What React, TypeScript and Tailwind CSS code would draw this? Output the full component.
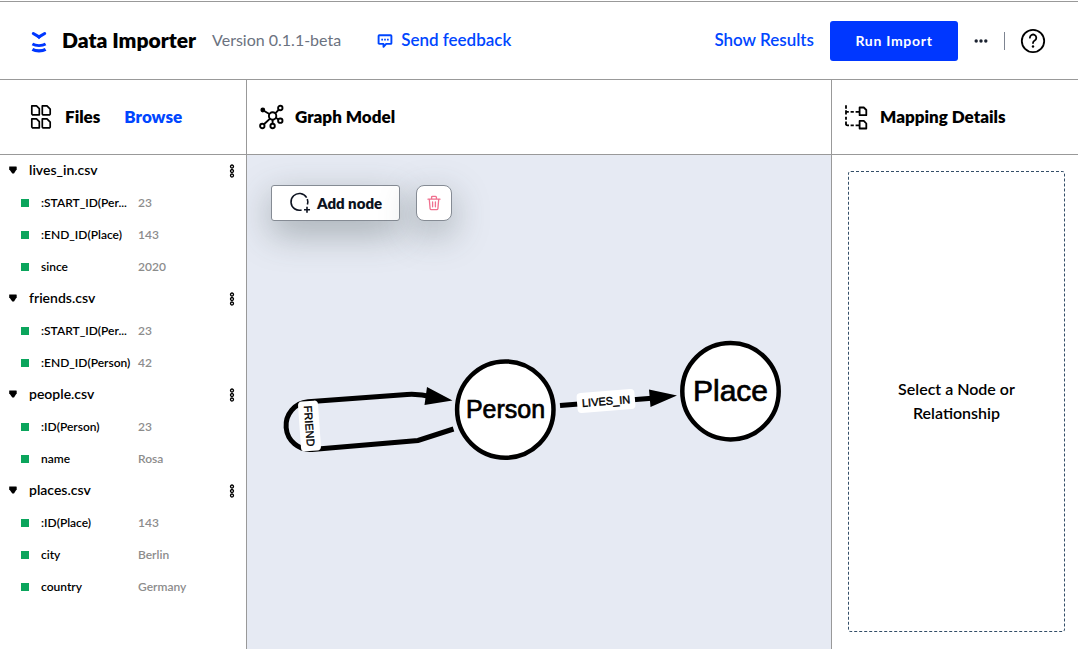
import React from "react";

type Field = { name: string; sample: string };
type SourceFile = { name: string; fields: Field[] };

const files: SourceFile[] = [
  {
    name: "lives_in.csv",
    fields: [
      { name: ":START_ID(Person)", sample: "23" },
      { name: ":END_ID(Place)", sample: "143" },
      { name: "since", sample: "2020" },
    ],
  },
  {
    name: "friends.csv",
    fields: [
      { name: ":START_ID(Person)", sample: "23" },
      { name: ":END_ID(Person)", sample: "42" },
    ],
  },
  {
    name: "people.csv",
    fields: [
      { name: ":ID(Person)", sample: "23" },
      { name: "name", sample: "Rosa" },
    ],
  },
  {
    name: "places.csv",
    fields: [
      { name: ":ID(Place)", sample: "143" },
      { name: "city", sample: "Berlin" },
      { name: "country", sample: "Germany" },
    ],
  },
];

const MAX_NAME = 16;

function shorten(name: string) {
  return name.length > MAX_NAME ? `${name.slice(0, MAX_NAME - 3)}...` : name;
}

function Logo() {
  return (
    <svg viewBox="0 0 16 22" className="mt-1 h-[22px] w-4 shrink-0 text-[#0037ff]" fill="none" stroke="currentColor" aria-hidden="true">
      <path d="M2.300 2.500L8 5.900 13.700 2.500" strokeWidth="3" strokeLinecap="round" strokeLinejoin="round" />
      <path d="M6 6h4L8 8.200z" fill="currentColor" stroke="none" />
      <path d="M1.400 13c3.500 2.100 9.700 2.100 13.200 0" strokeWidth="2.800" />
      <path d="M1.400 18.300c3.500 2 9.700 2 13.200 0" strokeWidth="3.200" />
    </svg>
  );
}

function FeedbackIcon() {
  return (
    <svg viewBox="0 0 16 16" className="size-4 shrink-0" fill="none" stroke="currentColor" strokeWidth="1.900" aria-hidden="true">
      <path d="M2.300 3.300h11.400a.7.7 0 0 1 .7.7v7.200a.7.7 0 0 1-.7.7H9.200L6.500 14.800v-2.900H2.300a.7.7 0 0 1-.7-.7V4a.7.7 0 0 1 .7-.7z" strokeLinejoin="round" />
      <path d="M4.300 7.600h1.700M7.150 7.600h1.700M10 7.600h1.700" strokeWidth="1.600" />
    </svg>
  );
}

function FilesIcon() {
  return (
    <svg viewBox="0 0 22 26" className="h-[26px] w-[22px] shrink-0" fill="none" stroke="currentColor" strokeWidth="1.700" strokeLinejoin="round" aria-hidden="true">
      <path d="M1.800 1.900h4.700l2.800 2.800v6.100H2.600l-.8-.8z" />
      <path d="M12.300 1.900h4.700l3.200 3.200v5l-.7.7h-6.500l-.7-.7z" />
      <path d="M1.800 14.900h4.700l2.800 2.800v6.100H2.600l-.8-.8z" />
      <path d="M12.300 14.900h4.700l3.200 3.200v5l-.7.7h-6.500l-.7-.7z" />
    </svg>
  );
}

function GraphIcon() {
  return (
    <svg viewBox="0 0 26 26" className="size-[26px] shrink-0" fill="none" stroke="currentColor" strokeWidth="1.900" aria-hidden="true">
      <circle cx="3.800" cy="6" r="2.400" fill="currentColor" stroke="none" />
      <circle cx="13.600" cy="12" r="3.700" />
      <circle cx="21.300" cy="4" r="2.200" />
      <circle cx="21.300" cy="16.700" r="2.200" />
      <circle cx="13.600" cy="22" r="2.200" />
      <circle cx="3.300" cy="22" r="2.200" />
      <path d="M4.800 6.700l6 3.600M16.300 9.300l3.500-3.700M16.900 13.800l2.500 1.700M13.600 15.700v4M5 20.300l6-5.700" />
    </svg>
  );
}

function MappingIcon() {
  return (
    <svg viewBox="0 0 24 26" className="h-[26px] w-6 shrink-0" fill="none" stroke="currentColor" strokeWidth="1.800" aria-hidden="true">
      <path d="M2 1.200v3.600M2 6.300v4.300M2 12.800v3M2 17.600v3.200" />
      <path d="M2 7.900h2.800M6.600 7.900h3.200M11.600 7.900H15M2 19.800c0 1.200.4 1.600 1.500 1.600h1.500M6.600 21.400h3.200M11.600 21.400H15" />
      <path d="M15.600 3.500h4.200l2.500 2.500v5.200h-6.700zM15.600 16.900h4.200l2.500 2.600v5h-6.700z" strokeLinejoin="round" />
    </svg>
  );
}

function HelpIcon() {
  return (
    <svg viewBox="0 0 26 26" className="size-[26px]" fill="none" stroke="currentColor" strokeWidth="1.800" strokeLinecap="round" aria-hidden="true">
      <circle cx="13" cy="13" r="11.200" />
      <path d="M9.900 9.700a3.200 3.200 0 1 1 4.800 2.800c-1.200.7-1.700 1.200-1.700 2.500" />
      <circle cx="13" cy="18.500" r="1.200" fill="currentColor" stroke="none" />
    </svg>
  );
}

function AddNodeIcon() {
  return (
    <svg viewBox="0 0 22 22" className="size-[22px] shrink-0" fill="none" stroke="currentColor" strokeWidth="1.600" aria-hidden="true">
      <path d="M12.600 18A8.400 8.400 0 1 1 18.400 12.500" strokeDasharray="37 1.500" />
      <path d="M18 14.700v6M15 17.700h6" />
    </svg>
  );
}

function TrashIcon() {
  return (
    <svg viewBox="0 0 16 16" className="size-4" fill="none" stroke="currentColor" strokeWidth="1.300" strokeLinecap="round" strokeLinejoin="round" aria-hidden="true">
      <path d="M2 4.200h12M5.600 4V2.200c0-.6.300-.9.900-.9h3c.6 0 .9.300.9.900V4M3.300 4.400l.8 9.200c.1.700.5 1.100 1.200 1.100h5.400c.7 0 1.100-.4 1.200-1.100l.8-9.200M6.600 7v4.800M9.400 7v4.800" />
    </svg>
  );
}

function KebabIcon() {
  return (
    <svg viewBox="0 0 6 14" className="h-3.5 w-1.5" fill="none" stroke="currentColor" strokeWidth="1.300" aria-hidden="true">
      <circle cx="3" cy="2.500" r="1.500" />
      <circle cx="3" cy="7" r="1.500" />
      <circle cx="3" cy="11.500" r="1.500" />
    </svg>
  );
}

function FileGroup({ file }: { file: SourceFile }) {
  return (
    <section>
      <div className="flex h-8 items-center justify-between pl-2 pr-[11px]">
        <button type="button" className="flex items-center gap-3 pb-0.5 text-sm font-semibold">
          <svg viewBox="0 0 9 8" className="h-2 w-[9px]" fill="currentColor" aria-hidden="true">
            <path d="M1.300.5h7l.4.600v2.200L6 7.500H4.300L1.200 3.300V1z" />
          </svg>
          {file.name}
        </button>
        <button type="button" aria-label={`${file.name} options`}>
          <KebabIcon />
        </button>
      </div>
      <table className="w-full table-fixed text-left text-xs">
        <colgroup>
          <col className="w-[41px]" />
          <col className="w-[97px]" />
          <col />
        </colgroup>
        <tbody>
          {file.fields.map((field) => (
            <tr key={field.name} className="h-8">
              <td className="p-0 pl-[21px]">
                <span className="block size-2 bg-[#0ba55c]" />
              </td>
              <th scope="row" title={field.name} className="whitespace-nowrap p-0 font-semibold">
                {shorten(field.name)}
              </th>
              <td className="p-0 font-semibold text-[#8c8c8c]">{field.sample}</td>
            </tr>
          ))}
        </tbody>
      </table>
    </section>
  );
}

function GraphDrawing() {
  return (
    <svg viewBox="0 0 584 494" className="absolute inset-0 h-full w-full font-['Liberation_Sans',Arial,sans-serif]" role="group" aria-label="Graph model">
      <g fill="none" stroke="#000" strokeWidth="5">
        <path d="M206.500 274l-35.500 11.500L65 294.500A23.900 23.900 0 0 1 61 246.800L160 239.500Q172 238.700 186 242" />
        <path d="M313 250.500L408 243" />
      </g>
      <path d="M180 232l25.500 13.500-28 4.500zM402 234.500l28 6-26.500 11.500z" />
      <g transform="translate(62.500 271) rotate(86)">
        <rect x="-25" y="-10" width="50" height="20" rx="4" fill="#fff" />
        <text textAnchor="middle" y="4" fontSize="11" stroke="#000" strokeWidth="0.400">FRIEND</text>
      </g>
      <g transform="translate(359 246) rotate(-4.500)">
        <rect x="-29" y="-10" width="58" height="20" rx="4" fill="#fff" />
        <text textAnchor="middle" y="4" fontSize="11" stroke="#000" strokeWidth="0.400">LIVES_IN</text>
      </g>
      <g stroke="#000" strokeWidth="4.500" fill="#fff">
        <circle cx="258.300" cy="254.600" r="48.200" />
        <circle cx="483.500" cy="236.200" r="48.200" />
      </g>
      <g textAnchor="middle" stroke="#000" strokeWidth="0.700">
        <text x="258.500" y="263" fontSize="25">Person</text>
        <text x="483.500" y="246" fontSize="30">Place</text>
      </g>
    </svg>
  );
}

export default function App() {
  return (
    <div className="flex min-h-screen flex-col bg-white pt-px font-['Lato','Noto_Sans',sans-serif] text-black">
      <header className="flex h-[79px] shrink-0 items-center justify-between border-y border-[#999] pl-[31px] pr-8">
        <div className="flex items-center whitespace-nowrap pb-0.5">
          <Logo />
          <h1 className="ml-[15px] text-[21px] font-extrabold leading-7">Data Importer</h1>
          <span className="ml-4 text-base text-[#6b7280]">Version 0.1.1-beta</span>
          <a href="#feedback" className="ml-9 flex items-center gap-2 text-[17px] font-semibold leading-6 text-[#0046ff]">
            <FeedbackIcon />
            Send feedback
          </a>
        </div>
        <div className="flex items-center whitespace-nowrap">
          <button type="button" className="pb-0.5 text-[17px] font-semibold leading-6 text-[#0046ff]">Show Results</button>
          <button type="button" className="ml-4 h-10 w-32 rounded-[3px] bg-[#0037ff] text-sm font-bold tracking-wider text-white">
            Run Import
          </button>
          <button type="button" aria-label="More actions" className="ml-4">
            <svg viewBox="0 0 14 6" className="h-1.5 w-3.5" fill="#1b2230" aria-hidden="true">
              <circle cx="2.200" cy="3" r="1.700" />
              <circle cx="7" cy="3" r="1.700" />
              <circle cx="11.800" cy="3" r="1.700" />
            </svg>
          </button>
          <span className="ml-4 h-[18px] w-px bg-[#7d8491]" />
          <button type="button" aria-label="Help" className="ml-[15px]">
            <HelpIcon />
          </button>
        </div>
      </header>

      <main className="flex flex-1 items-stretch">
        <aside className="flex w-[247px] shrink-0 flex-col border-r border-[#999]">
          <div className="flex h-[75px] items-center border-b border-[#999] pl-[30px] text-[17px] font-extrabold">
            <FilesIcon />
            <h2 className="ml-[13px]">Files</h2>
            <button type="button" className="ml-6 text-[#0046ff]">Browse</button>
          </div>
          {files.map((file) => (
            <FileGroup key={file.name} file={file} />
          ))}
        </aside>

        <section className="flex min-w-0 flex-1 flex-col">
          <div className="flex h-[75px] items-center gap-2.5 border-b border-[#999] pl-3 text-[17px] font-extrabold">
            <GraphIcon />
            <h2>Graph Model</h2>
          </div>
          <div className="relative flex-1 overflow-hidden bg-[#e6eaf3]">
            <GraphDrawing />
            <div className="relative flex gap-4 pl-6 pt-[30px]">
              <button type="button" className="flex h-9 w-[129px] items-center justify-center gap-1.5 rounded-[3px] border border-[#858b94] bg-white text-[15px] font-extrabold text-[#0c1220] shadow-[0_12px_36px_rgba(60,75,75,0.4)]">
                <AddNodeIcon />
                Add node
              </button>
              <button type="button" aria-label="Delete" className="flex size-9 items-center justify-center rounded-lg border border-[#858b94] bg-white text-[#f0708f] shadow-[0_12px_36px_rgba(60,75,75,0.4)]">
                <TrashIcon />
              </button>
            </div>
          </div>
        </section>

        <aside className="flex w-[247px] shrink-0 flex-col border-l border-[#999]">
          <div className="flex h-[75px] items-center gap-3 border-b border-[#999] pl-3 text-[17px] font-extrabold">
            <MappingIcon />
            <h2>Mapping Details</h2>
          </div>
          <div className="flex flex-1 pb-[17px] pl-4 pr-[13px] pt-4">
            <div className="flex flex-1 items-center justify-center rounded-[3px] border border-dashed border-[#334e68] px-8 pb-0.5">
              <p className="text-center text-base font-semibold leading-6">Select a Node or Relationship</p>
            </div>
          </div>
        </aside>
      </main>
    </div>
  );
}
